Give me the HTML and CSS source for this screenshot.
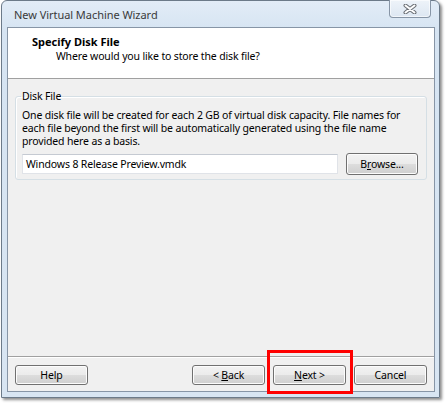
FILE: index.html
```html
<!DOCTYPE html>
<html>
<head>
<meta charset="utf-8">
<link rel="stylesheet" href="styles.css">
</head>
<body>
<div class="stage">
  <div class="window">
    <div class="titlebar">
      <span class="title">New Virtual Machine Wizard</span>
      <div class="close">
        <svg width="16" height="10" viewBox="0 0 16 10">
          <path d="M3.5 1.5 L12.5 8.5 M12.5 1.5 L3.5 8.5" stroke="#6b6f75" stroke-width="4" stroke-linecap="round" fill="none"/>
          <path d="M3.5 1.5 L12.5 8.5 M12.5 1.5 L3.5 8.5" stroke="#ffffff" stroke-width="2" stroke-linecap="round" fill="none"/>
        </svg>
      </div>
    </div>
    <div class="client">
      <div class="header">
        <div class="h-title">Specify Disk File</div>
        <div class="h-sub">Where would you like to store the disk file?</div>
      </div>
      <div class="main">
        <fieldset class="group">
          <legend>Disk File</legend>
          <p class="desc">One disk file will be created for each 2 GB of virtual disk capacity. File names for each file beyond the first will be automatically generated using the file name provided here as a basis.</p>
          <div class="file-row">
            <div class="input">Windows 8 Release Preview.vmdk</div>
            <div class="btn browse"><span>B<u>r</u>owse...</span></div>
          </div>
        </fieldset>
      </div>
      <div class="footer">
        <div class="btn"><span>Help</span></div>
        <div class="spacer"></div>
        <div class="btn"><span>&lt; <u>B</u>ack</span></div>
        <div class="btn"><span><u>N</u>ext &gt;</span></div>
        <div class="btn"><span>Cancel</span></div>
      </div>
    </div>
  </div>
  <div class="highlight"></div>
</div>
</body>
</html>
```

FILE: styles.css
```css
html, body {
  margin: 0;
  padding: 0;
  background: #ffffff;
}

body {
  font-family: "Noto Sans", "Open Sans", sans-serif;
  font-size: 10.5px;
  letter-spacing: -0.15px;
  color: #000;
}

.stage {
  position: relative;
  width: 446px;
  height: 403px;
}

.window {
  margin-left: 1px;
  width: 439px;
  height: 398px;
  box-sizing: border-box;
  border: 1px solid #6c7a89;
  border-radius: 6px 6px 0 0;
  background: linear-gradient(#e2ecf7, #d6e4f2 30px, #d8e5f2);
  box-shadow: 2px 2px 3px rgba(0, 0, 0, 0.45);
  padding: 0 4px 5px 5px;
  display: flex;
  flex-direction: column;
}

.titlebar {
  height: 26px;
  position: relative;
  display: flex;
  align-items: center;
}

.title {
  margin-left: 7px;
  margin-top: 1px;
  font-size: 11px;
  letter-spacing: -0.05px;
  color: #3a3a3a;
}

.close {
  position: absolute;
  top: -1px;
  right: 4px;
  width: 42px;
  height: 18px;
  box-sizing: border-box;
  border: 1px solid #8795a6;
  border-top: none;
  border-radius: 0 0 4px 4px;
  background: linear-gradient(#eef3f9, #dde7f2);
  box-shadow: inset 0 0 0 1px rgba(255, 255, 255, 0.6);
  display: flex;
  align-items: center;
  justify-content: center;
}

.client {
  flex: 1;
  border: 1px solid #8795a6;
  background: #f0f0f0;
  display: flex;
  flex-direction: column;
}

.header {
  background: #ffffff;
  border-bottom: 1px solid #a0a0a0;
  padding: 6px 0 0 24px;
  box-sizing: border-box;
  height: 51px;
}

.h-title {
  font-weight: bold;
  font-size: 11px;
  letter-spacing: 0;
  line-height: 15px;
}

.h-sub {
  margin-left: 24px;
  line-height: 15px;
}

.main {
  flex: 1;
}

.group {
  margin: 10px 7px 0 7px;
  border: 1px solid #d5dfe5;
  border-radius: 3px;
  padding: 0 8px 4px 6px;
  box-shadow: inset 1px 1px 0 #fff;
}

.group legend {
  padding: 0 1px;
  margin-left: -1px;
  line-height: 14px;
}

.desc {
  margin: 6px 0 0 0;
  line-height: 13px;
}

.file-row {
  margin-top: 5px;
  display: flex;
  align-items: center;
  gap: 8px;
}

.input {
  flex: 1;
  height: 20px;
  box-sizing: border-box;
  border: 1px solid #e0e3e8;
  border-top-color: #c5cad2;
  background: #fff;
  padding: 0 3px;
  line-height: 18px;
}

.btn {
  width: 73px;
  height: 20px;
  box-sizing: border-box;
  border: 1px solid #707070;
  border-radius: 3px;
  background: linear-gradient(#f2f2f2, #ebebeb 50%, #dddddd 50%, #cfcfcf);
  box-shadow: inset 0 0 0 1px #fcfcfc;
  display: flex;
  align-items: center;
  justify-content: center;
  line-height: 18px;
}

.btn u {
  text-decoration-thickness: 1px;
  text-underline-offset: 1px;
}

.browse {
  width: 72px;
  height: 22px;
}

.footer {
  border-top: 1px solid #a0a0a0;
  box-shadow: inset 0 1px 0 #ffffff;
  padding: 8px 7px 6px 7px;
  display: flex;
  gap: 8px;
}

.spacer {
  flex: 1;
}

.highlight {
  position: absolute;
  left: 267px;
  top: 350px;
  width: 86px;
  height: 44px;
  box-sizing: border-box;
  border: 3px solid #ff0000;
}
```
